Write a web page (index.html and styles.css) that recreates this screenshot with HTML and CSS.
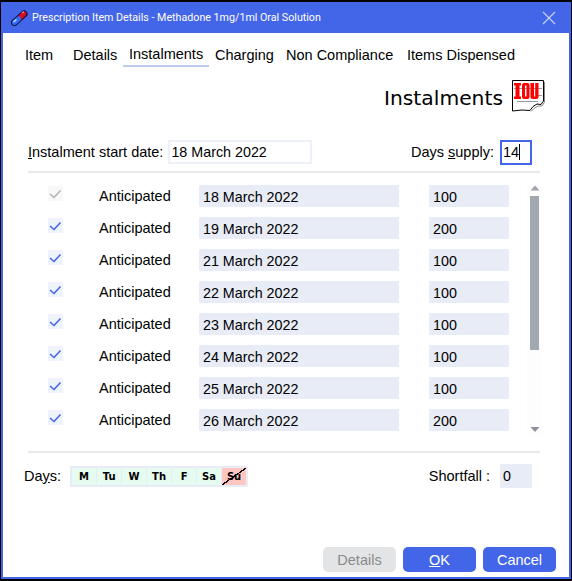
FILE: index.html
```html
<!DOCTYPE html>
<html lang="en">
<head>
<meta charset="utf-8">
<title>Prescription Item Details</title>
<link rel="stylesheet" href="styles.css">
</head>
<body>
<div class="window">
  <header class="titlebar">
    <svg class="pill" width="17" height="17" viewBox="0 0 17 17">
      <path d="M3.5 13.5 L13 5" stroke="#0c0c38" stroke-width="7" stroke-linecap="round" fill="none"/>
      <path d="M8.5 9 L13 5" stroke="#d40f22" stroke-width="5" stroke-linecap="round" fill="none"/>
      <path d="M3.5 13.5 L7.5 10" stroke="#2f6bf5" stroke-width="5" stroke-linecap="round" fill="none"/>
      <path d="M2.5 13 L5.5 10.5" stroke="#dbe6ff" stroke-width="1.2" fill="none"/>
      <path d="M11 4 L13 2.8" stroke="#ff9aa0" stroke-width="1.2" fill="none"/>
    </svg>
    <span class="title">Prescription Item Details - Methadone 1mg/1ml Oral Solution</span>
    <svg class="close" width="14" height="14" viewBox="0 0 14 14"><path d="M1 1 L13 13 M13 1 L1 13" stroke="#c5d2f5" stroke-width="1.2" fill="none"/></svg>
  </header>

  <nav class="tabs">
    <span class="tab tab-item">Item</span>
    <span class="tab tab-details">Details</span>
    <span class="tab tab-active">Instalments</span>
    <span class="tab tab-charging">Charging</span>
    <span class="tab tab-nc">Non Compliance</span>
    <span class="tab">Items Dispensed</span>
  </nav>

  <div class="heading">
    <span class="heading-text">Instalments</span>
    <svg class="iou" width="33" height="32" viewBox="0 0 33 32">
      <path d="M.5 .5 H31.5 V21 L29 24.5 L25 24 L21 26.5 L18 30.5 L10 30 L.5 31 Z" fill="#fff" stroke="#000"/>
      <path d="M32.5 2 V22 L30 26 L26 26 L22 28.5 L19 31.5" stroke="#888" fill="none"/>
      <path d="M2 8.5 H30 M25 15.5 H30 M5 21.5 H26" stroke="#999" fill="none"/>
      <path d="M2 3 H9 V5.5 H7.5 V16.5 H9 V19 H2 V16.5 H3.5 V5.5 H2 Z" fill="#f00"/>
      <path d="M10 5 Q10 3 12 3 H15.5 Q17.5 3 17.5 5 V17 Q17.5 19 15.5 19 H12 Q10 19 10 17 Z M13 5.5 V16.5 H14.5 V5.5 Z" fill="#f00" fill-rule="evenodd"/>
      <path d="M18.5 3 H22 V16.5 H23.2 V3 H26.5 V17 Q26.5 19 24.5 19 H20.5 Q18.5 19 18.5 17 Z" fill="#f00"/>
    </svg>
  </div>

  <div class="start-row">
    <label class="lbl"><u>I</u>nstalment start date:</label>
    <span class="date-input">18 March 2022</span>
    <span class="spacer"></span>
    <label class="lbl">Days <u>s</u>upply:</label>
    <span class="supply-input">14<i class="caret"></i></span>
  </div>

  <div class="rule rule-top"></div>

  <section class="list">
    <div class="rows">
      <div class="row"><span class="check check-off"><svg width="15" height="15" viewBox="0 0 15 15"><path d="M2 8 L6 11.5 L12.5 4.5" stroke="#b4b4b4" stroke-width="1.6" fill="none"/></svg></span><span class="status">Anticipated</span><span class="field field-date">18 March 2022</span><span class="field field-qty">100</span></div>
      <div class="row"><span class="check"><svg width="15" height="15" viewBox="0 0 15 15"><path d="M2 8 L6 11.5 L12.5 4.5" stroke="#4468e8" stroke-width="1.6" fill="none"/></svg></span><span class="status">Anticipated</span><span class="field field-date">19 March 2022</span><span class="field field-qty">200</span></div>
      <div class="row"><span class="check"><svg width="15" height="15" viewBox="0 0 15 15"><path d="M2 8 L6 11.5 L12.5 4.5" stroke="#4468e8" stroke-width="1.6" fill="none"/></svg></span><span class="status">Anticipated</span><span class="field field-date">21 March 2022</span><span class="field field-qty">100</span></div>
      <div class="row"><span class="check"><svg width="15" height="15" viewBox="0 0 15 15"><path d="M2 8 L6 11.5 L12.5 4.5" stroke="#4468e8" stroke-width="1.6" fill="none"/></svg></span><span class="status">Anticipated</span><span class="field field-date">22 March 2022</span><span class="field field-qty">100</span></div>
      <div class="row"><span class="check"><svg width="15" height="15" viewBox="0 0 15 15"><path d="M2 8 L6 11.5 L12.5 4.5" stroke="#4468e8" stroke-width="1.6" fill="none"/></svg></span><span class="status">Anticipated</span><span class="field field-date">23 March 2022</span><span class="field field-qty">100</span></div>
      <div class="row"><span class="check"><svg width="15" height="15" viewBox="0 0 15 15"><path d="M2 8 L6 11.5 L12.5 4.5" stroke="#4468e8" stroke-width="1.6" fill="none"/></svg></span><span class="status">Anticipated</span><span class="field field-date">24 March 2022</span><span class="field field-qty">100</span></div>
      <div class="row"><span class="check"><svg width="15" height="15" viewBox="0 0 15 15"><path d="M2 8 L6 11.5 L12.5 4.5" stroke="#4468e8" stroke-width="1.6" fill="none"/></svg></span><span class="status">Anticipated</span><span class="field field-date">25 March 2022</span><span class="field field-qty">100</span></div>
      <div class="row"><span class="check"><svg width="15" height="15" viewBox="0 0 15 15"><path d="M2 8 L6 11.5 L12.5 4.5" stroke="#4468e8" stroke-width="1.6" fill="none"/></svg></span><span class="status">Anticipated</span><span class="field field-date">26 March 2022</span><span class="field field-qty">200</span></div>
    </div>
    <div class="scrollbar">
      <svg class="arrow" width="10" height="6" viewBox="0 0 10 6"><path d="M0.5 5.5 L5 .5 L9.5 5.5 Z" fill="#a0a4ac"/></svg>
      <div class="track"><div class="thumb"></div></div>
      <svg class="arrow" width="10" height="6" viewBox="0 0 10 6"><path d="M0.5 0 L5 5 L9.5 0 Z" fill="#8c9098"/></svg>
    </div>
  </section>

  <div class="rule rule-bottom"></div>

  <div class="days-row">
    <label class="lbl">Da<u>y</u>s:</label>
    <div class="days">
      <span class="day">M</span><span class="day">Tu</span><span class="day">W</span><span class="day">Th</span><span class="day">F</span><span class="day">Sa</span><span class="day day-off">Su</span>
    </div>
    <span class="spacer"></span>
    <label class="lbl">Shortfall :</label>
    <span class="shortfall">0</span>
  </div>

  <footer class="buttons">
    <button class="btn btn-disabled">Details</button>
    <button class="btn"><u>O</u>K</button>
    <button class="btn">Cancel</button>
  </footer>
</div>
</body>
</html>
```
FILE: styles.css
```css
* { box-sizing: border-box; }
html, body { margin: 0; height: 100%; }
body {
  background: #000;
  padding: 2px 1px 2px 1px;
  font-family: "Liberation Sans", Arial, sans-serif;
  font-size: 14.5px;
  color: #000;
}
.window {
  height: 577px;
  width: 570px;
  background: #fff;
  border: 2px solid #4366e8;
  border-top: 0;
  display: flex;
  flex-direction: column;
}
.titlebar {
  height: 31px;
  flex: none;
  background: #4366e8;
  color: #fff;
  display: flex;
  align-items: center;
  padding: 0 13px 0 8px;
}
.pill { flex: none; margin-right: 4px; }
.title { font-family: Roboto, sans-serif; font-size: 10.7px; flex: 1; white-space: nowrap; }
.close { flex: none; }
.tabs {
  display: flex;
  height: 35px;
  padding: 12px 0 0 22px;
  white-space: nowrap;
}
.tab { height: 22px; line-height: 20px; }
.tab-item { width: 48px; }
.tab-details { width: 50px; }
.tab-active {
  width: 86px;
  padding-left: 6px;
  line-height: 18px;
  border-bottom: 2px solid #bccbf0;
}
.tab-charging { padding-left: 6px; width: 77px; }
.tab-nc { width: 121px; }
.heading {
  display: flex;
  justify-content: flex-end;
  align-items: center;
  height: 36px;
  margin-top: 10px;
  padding-right: 24px;
}
.heading-text { font-family: "DejaVu Sans", sans-serif; font-size: 20.3px; margin-right: 9px; padding-top: 4px; }
.start-row, .days-row { display: flex; align-items: center; }
.start-row { margin-top: 26px; height: 24px; padding: 0 37px 0 25px; }
.spacer { flex: 1; }
.date-input {
  width: 144px;
  height: 24px;
  margin-left: 5px;
  border: 2px solid #ecf0f9;
  padding-left: 1px;
  line-height: 20px;
  font-size: 14.3px;
}
.supply-input {
  width: 32px;
  height: 25px;
  margin-left: 6px;
  border: 2px solid #4366e8;
  padding-left: 1px;
  line-height: 21px;
  display: flex;
  align-items: center;
}
.caret { display: inline-block; width: 1px; height: 16px; background: #000; }
.rule { height: 2px; background: #e9e9e9; margin: 0 29px 0 25px; flex: none; }
.rule-top { margin-top: 7px; }
.list { display: flex; height: 278px; }
.rows { display: flex; flex-direction: column; padding-top: 12px; gap: 10px; }
.row { display: flex; align-items: center; height: 22px; }
.check {
  width: 15px;
  height: 15px;
  margin: -6px 0 0 45px;
  background: #eff3fe;
  display: block;
}
.check svg { display: block; }
.check-off { background: #f8f8f8; }
.status { width: 100px; margin: 0 0 0 36px; }
.field { height: 22px; background: #e8ecf6; padding-left: 4px; line-height: 24px; font-size: 14.3px; }
.field-date { width: 200px; }
.field-qty { width: 80px; margin-left: 30px; }
.scrollbar {
  margin: 11px 0 0 18px;
  padding: 1px 0 3px;
  width: 15px;
  height: 252px;
  background: #fdfdfd;
  display: flex;
  flex-direction: column;
  align-items: center;
  justify-content: space-between;
}
.arrow { display: block; flex: none; }
.track { flex: 1; width: 9px; padding-top: 5px; }
.thumb { width: 9px; height: 154px; background: #a2a8b0; }
.days-row { height: 24px; margin-top: 11px; padding: 0 37px 0 21px; }
.days {
  display: flex;
  gap: 1px;
  margin-left: 9px;
  padding: 2px;
  background: #e8ecf6;
  height: 21px;
}
.day {
  width: 24px;
  height: 17px;
  background: #e6fcf1;
  font-family: "DejaVu Sans", sans-serif;
  font-weight: 700;
  font-size: 10px;
  line-height: 17px;
  text-align: center;
}
.day-off {
  background: linear-gradient(to bottom right, transparent calc(50% - 0.6px), #000 calc(50% - 0.6px), #000 calc(50% + 0.6px), transparent calc(50% + 0.6px)), #ffc6c2;
}
.shortfall {
  width: 32px;
  height: 24px;
  margin-left: 10px;
  background: #e8ecf6;
  padding-left: 3px;
  line-height: 24px;
  font-size: 14.3px;
}
.buttons {
  display: flex;
  justify-content: flex-end;
  gap: 7px;
  margin-top: auto;
  padding: 0 13px 5px 0;
}
.btn {
  width: 73px;
  height: 25px;
  border: 0;
  border-radius: 5px;
  background: #4366e8;
  color: #fff;
  font: inherit;
  padding: 0;
}
.btn-disabled { background: #e3e4e6; color: #8a8a8a; }
```
